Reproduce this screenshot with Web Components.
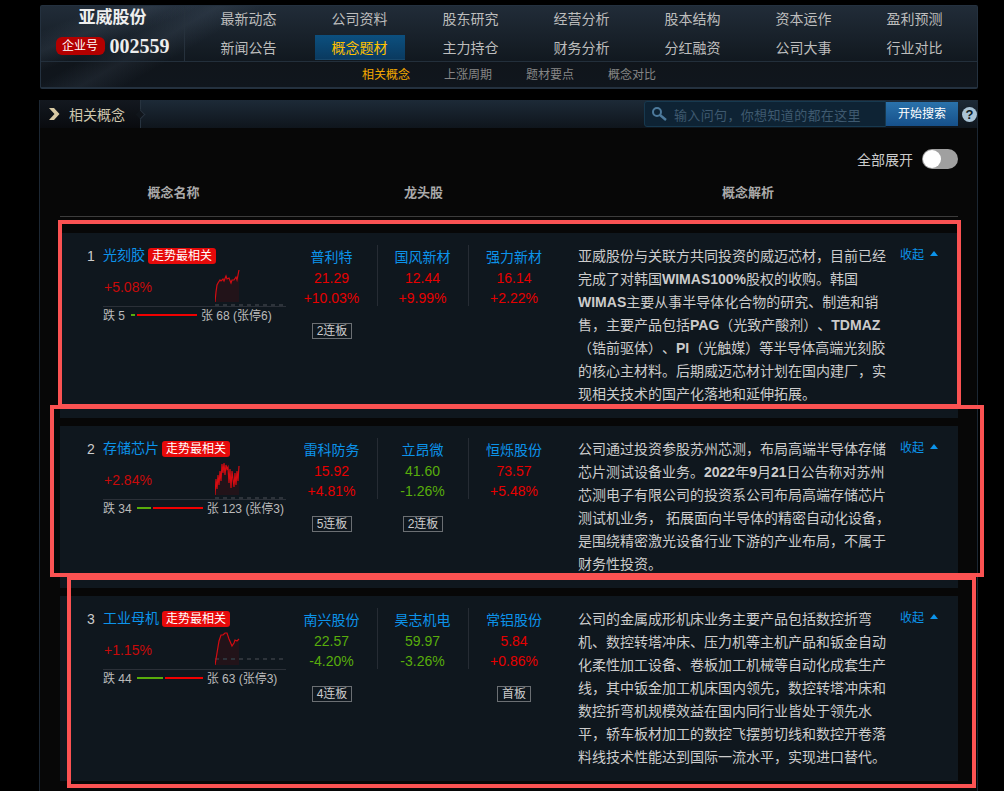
<!DOCTYPE html>
<html lang="zh">
<head>
<meta charset="utf-8">
<title>相关概念</title>
<style>
html,body{margin:0;padding:0;background:#000;height:791px;overflow:hidden}
body{font-family:"Liberation Sans","Noto Sans CJK SC",sans-serif;font-size:14px;color:#ccc}
b{font-weight:700}
</style>
</head>
<body>
<top-panel></top-panel>
<concept-panel>
  <concept-card num="1" name="光刻胶" pct="+5.08%" down="5" up="68" limit="6" green="4" red="60" gap="6" spark="1">
    <stock-col slot="stocks" name="普利特" price="21.29" pct="+10.03%" dir="up" tag="2连板" tagw="40"></stock-col>
    <stock-col slot="stocks" name="国风新材" price="12.44" pct="+9.99%" dir="up"></stock-col>
    <stock-col slot="stocks" name="强力新材" price="16.14" pct="+2.22%" dir="up" last></stock-col>
    亚威股份与关联方共同投资的威迈芯材，目前已经<br>
    完成了对韩国<b>WIMAS100%</b>股权的收购。韩国<br>
    <b>WIMAS</b>主要从事半导体化合物的研究、制造和销<br>
    售，主要产品包括<b>PAG</b>（光致产酸剂）、<b>TDMAZ</b><br>
    （锆前驱体）、<b>PI</b>（光触媒）等半导体高端光刻胶<br>
    的核心主材料。后期威迈芯材计划在国内建厂，实<br>
    现相关技术的国产化落地和延伸拓展。
  </concept-card>
  <concept-card num="2" name="存储芯片" pct="+2.84%" down="34" up="123" limit="3" green="14" red="50" gap="5" spark="2">
    <stock-col slot="stocks" name="雷科防务" price="15.92" pct="+4.81%" dir="up" tag="5连板" tagw="40"></stock-col>
    <stock-col slot="stocks" name="立昂微" price="41.60" pct="-1.26%" dir="down" tag="2连板" tagw="40"></stock-col>
    <stock-col slot="stocks" name="恒烁股份" price="73.57" pct="+5.48%" dir="up" last></stock-col>
    公司通过投资参股苏州芯测，布局高端半导体存储<br>
    芯片测试设备业务。<b>2022</b>年<b>9</b>月<b>21</b>日公告称对苏州<br>
    芯测电子有限公司的投资系公司布局高端存储芯片<br>
    测试机业务， 拓展面向半导体的精密自动化设备，<br>
    是围绕精密激光设备行业下游的产业布局，不属于<br>
    财务性投资。
  </concept-card>
  <concept-card num="3" name="工业母机" pct="+1.15%" down="44" up="63" limit="3" green="26" red="38" gap="5" spark="3">
    <stock-col slot="stocks" name="南兴股份" price="22.57" pct="-4.20%" dir="down" tag="4连板" tagw="40"></stock-col>
    <stock-col slot="stocks" name="昊志机电" price="59.97" pct="-3.26%" dir="down"></stock-col>
    <stock-col slot="stocks" name="常铝股份" price="5.84" pct="+0.86%" dir="up" tag="首板" tagw="34" last></stock-col>
    公司的金属成形机床业务主要产品包括数控折弯<br>
    机、数控转塔冲床、压力机等主机产品和钣金自动<br>
    化柔性加工设备、卷板加工机械等自动化成套生产<br>
    线，其中钣金加工机床国内领先，数控转塔冲床和<br>
    数控折弯机规模效益在国内同行业皆处于领先水<br>
    平，轿车板材加工的数控飞摆剪切线和数控开卷落<br>
    料线技术性能达到国际一流水平，实现进口替代。
  </concept-card>
</concept-panel>
<mark-box x="58" y="220" w="903" h="188"></mark-box>
<mark-box x="50" y="405" w="934" h="172"></mark-box>
<mark-box x="67" y="576" w="909" h="212"></mark-box>

<script>
const NAV=[["最新动态","公司资料","股东研究","经营分析","股本结构","资本运作","盈利预测"],
           ["新闻公告","概念题材","主力持仓","财务分析","分红融资","公司大事","行业对比"]];
class TopPanel extends HTMLElement{
  connectedCallback(){
    const root=this.attachShadow({mode:"open"});
    const cell=(t)=>`<div class="cell"><span class="${t==="概念题材"?"on":""}">${t}</span></div>`;
    root.innerHTML=`<style>
      :host{display:block;box-sizing:border-box;width:938px;height:84px;margin:5px 0 0 40px;border:1px solid #24313f;border-bottom:2px solid #24313f;border-radius:2px;
        background:
          linear-gradient(158deg,transparent 12%,rgba(120,140,165,.13) 22%,transparent 32%) 0 0/300px 84px no-repeat,
          linear-gradient(150deg,transparent 30%,rgba(120,140,165,.11) 40%,transparent 50%) 0 0/300px 84px no-repeat,
          linear-gradient(#212c38 0,#11181f 55px,#10151b 56px,#10161d 100%);
        color:#bdbdbd}
      .main{display:flex;height:55px;border-bottom:1px solid #232f3b}
      .logo{box-sizing:border-box;width:144px;border-right:1px solid #26313c;display:flex;flex-direction:column;align-items:center}
      .name{font:700 17px/24px "Liberation Serif","Noto Sans CJK SC",serif;color:#eee;margin-top:0}
      .id{display:flex;align-items:center;gap:5px;margin-top:7px}
      .badge{box-sizing:border-box;width:49px;height:18px;background:#b30000;border-radius:6px;color:#fff;font-size:12px;line-height:18px;text-align:center}
      .code{font:700 20px/18px "Liberation Serif",serif;color:#eee}
      .nav{display:grid;grid-template-columns:repeat(7,111px);grid-template-rows:29px 25px;padding-left:8px}
      .cell{display:flex;justify-content:center;line-height:26px;font-size:14px}
      .cell span{width:90px;height:25px;text-align:center}
      .cell span.on{color:#ffc000;background:linear-gradient(#0c507f,#0a3a60);border-bottom:1px solid #17476b;box-sizing:border-box}
      .sub{display:flex;gap:34px;padding-left:321px;font-size:12px;line-height:26px;color:#868686}
      .sub .on{color:#f5a800}
    </style>
    <div class="main">
      <div class="logo"><div class="name">亚威股份</div>
        <div class="id"><span class="badge">企业号</span><span class="code">002559</span></div></div>
      <div class="nav">${NAV.flat().map(cell).join("")}</div>
    </div>
    <div class="sub"><span class="on">相关概念</span><span>上涨周期</span><span>题材要点</span><span>概念对比</span></div>`;
  }
}
class SearchBox extends HTMLElement{
  connectedCallback(){
    this.attachShadow({mode:"open"}).innerHTML=`<style>
      :host{display:flex;align-items:center;height:26px}
      .box{box-sizing:border-box;width:242px;height:26px;display:flex;align-items:center;gap:7px;padding-left:6px;background:#0e2334;border:1px solid #17394f;border-radius:3px 0 0 3px;color:#3f5a70;font-size:13px;letter-spacing:.35px;white-space:nowrap}
      button{all:unset;box-sizing:border-box;width:72px;height:24px;text-align:center;font:12px/25px "Liberation Sans","Noto Sans CJK SC",sans-serif;color:#fff;background:linear-gradient(#2a72ab,#16508a)}
      .help{width:15px;height:15px;border-radius:50%;background:#a9c3d6;color:#0d1a24;font:700 13px/15px "Liberation Sans",sans-serif;text-align:center;margin-left:4px}
    </style>
    <div class="box"><svg width="16" height="16" viewBox="0 0 16 16"><circle cx="6" cy="6" r="4" fill="none" stroke="#4d7a9c" stroke-width="2"/><path d="M9 9l6 5" stroke="#4d7a9c" stroke-width="2.4"/></svg><span>输入问句，你想知道的都在这里</span></div>
    <button type="button">开始搜索</button><span class="help">?</span>`;
  }
}
class ConceptPanel extends HTMLElement{
  connectedCallback(){
    this.attachShadow({mode:"open"}).innerHTML=`<style>
      :host{display:block;box-sizing:border-box;width:939px;height:700px;margin:11px 0 0 39px;border-left:1px solid #1c2733;border-right:1px solid #1c2733;background:#070707}
      .head{display:flex;justify-content:space-between;height:28px;background:linear-gradient(#1d2a37,#0f151c)}
      .tab{position:relative;box-sizing:border-box;width:101px;display:flex;align-items:center;gap:9px;padding-left:9px;color:#cfc7ae;font-size:14px;background:linear-gradient(#13181f,#090b0f);border-right:1px solid #27333f}
      .tab::after{content:"";position:absolute;right:-4px;top:11px;width:6px;height:6px;background:#10151b;border-top:1px solid #27333f;border-right:1px solid #27333f;transform:rotate(45deg)}
      .right{margin-top:1px}
      .body{padding:0 19px 0 20px}
      .switch{display:flex;justify-content:flex-end;align-items:center;gap:9px;margin-top:21px;height:20px;font-size:14px;color:#ccc}
      .track{width:36px;height:20px;border-radius:10px;background:#a0a0a0;position:relative}
      .knob{position:absolute;left:1px;top:1px;width:18px;height:18px;border-radius:50%;background:#fff}
      .cols{display:grid;grid-template-columns:227px 273px 376px 1fr;margin-top:14px;height:20px;line-height:20px;padding-bottom:13px;border-bottom:1px solid #3c3c3c;font-size:13px;font-weight:700;color:#aaa;text-align:center}
      .cards{display:flex;flex-direction:column;gap:8px;margin-top:16px}
    </style>
    <div class="head">
      <div class="tab"><svg width="11" height="12" viewBox="0 0 11 12"><path d="M0 0h5l5.5 6L5 12H0l5.5-6z" fill="#d8c9a3"/></svg><span>相关概念</span></div>
      <search-box class="right"></search-box>
    </div>
    <div class="body">
      <div class="switch"><span>全部展开</span><span class="track"><span class="knob"></span></span></div>
      <div class="cols"><span>概念名称</span><span>龙头股</span><span>概念解析</span></div>
      <div class="cards"><slot></slot></div>
    </div>`;
  }
}
const SPARKS={
 1:{line:"M0 34L1 24L2 17L3 15L5 12L6 13L8 11L9 13L11 8L12 11L14 10L16 15L17 12L19 12L21 9L22 12L24 2",base:37},
 2:{line:"M0 34L1 18L2 28L3 14L4 24L5 10L6 20L7 3L8 12L9 2L10 14L11 4L12 8L13 6L14 22L15 8L16 27L17 10L18 18L19 26L20 12L21 24L22 10L23 20L24 5",base:37},
 3:{line:"M0 34L1 28L2 22L4 10L6 4L8 4L10 2L12 2L14 8L17 15L19 12L20 9L22 10L24 8",base:28}
};
class ConceptCard extends HTMLElement{
  connectedCallback(){
    const a=n=>this.getAttribute(n);
    const s=SPARKS[a("spark")];
    this.attachShadow({mode:"open"}).innerHTML=`<style>
      :host{display:grid;grid-template-columns:227px 273px 340px 58px;padding:12px 0;background:#0f171e}
      .left{padding-left:27px}
      .title{display:flex;align-items:flex-start;height:23px}
      .num{width:16px;color:#ccc;font-size:14px;line-height:23px}
      .name{color:#0c93ea;font-size:14px;line-height:21px}
      .hot{margin:3px 0 0 3px;width:68px;height:16px;background:#e60a0a;border-radius:3px;color:#fff;font-size:12px;line-height:16px;text-align:center}
      .chart{display:flex;align-items:center;width:183px;height:38px;margin-left:16px;border-bottom:1px solid #2b3038}
      .pct{width:112px;box-sizing:border-box;padding-left:1px;color:#c80a0a;font-size:14px}
      svg{flex:none;display:block}
      .sum{display:flex;margin-left:16px;height:18px;line-height:18px;font-size:12px;color:#bbb;white-space:nowrap}
      .g,.r{height:2px;margin-top:7px}
      .g{background:#58ad0c}
      .r{background:#f00000;margin:7px 4px 0 2px}
      .stocks{display:flex}
      .desc{margin-left:18px;font-size:14px;line-height:23px;color:#ccc;white-space:nowrap;text-spacing-trim:space-all}
      .fold{display:flex;align-items:center;gap:6px;height:20px;margin-top:-2px;font-size:12px;color:#0c93ea}
      .tri{width:0;height:0;border:4px solid transparent;border-top:0;border-bottom:5px solid #0c93ea}
    </style>
    <div class="left">
      <div class="title"><span class="num">${a("num")}</span><span class="name">${a("name")}</span><span class="hot">走势最相关</span></div>
      <div class="chart"><span class="pct">${a("pct")}</span>
        <svg width="71" height="38" viewBox="0 0 71 38">
          <path d="${s.line}V34H0Z" fill="#3a1015" opacity=".45"/>
          <path d="M0 ${s.base}H68" stroke="#2d333a" stroke-width="2" stroke-dasharray="4 4"/>
          <path d="${s.line}" fill="none" stroke="#d40c12" stroke-width="1.2"/>
        </svg></div>
      <div class="sum"><span>跌 ${a("down")}</span><span class="g" style="width:${a("green")}px;margin-left:${a("gap")}px"></span><span class="r" style="width:${a("red")}px"></span><span>张 ${a("up")} (张停${a("limit")})</span></div>
    </div>
    <div class="stocks"><slot name="stocks"></slot></div>
    <div class="desc"><slot></slot></div>
    <div class="fold"><span>收起</span><span class="tri"></span></div>`;
  }
}
class StockCol extends HTMLElement{
  connectedCallback(){
    const a=n=>this.getAttribute(n);
    const c=a("dir")==="up"?"#e60000":"#58ad0c";
    const tag=a("tag")?`<span class="tag" style="width:${a("tagw")}px">${a("tag")}</span>`:"";
    this.attachShadow({mode:"open"}).innerHTML=`<style>
      :host{display:flex;flex-direction:column;align-items:center;width:91px;box-sizing:border-box}
      .top{box-sizing:border-box;width:100%;height:61px;padding-right:1px;text-align:center;${this.hasAttribute("last")?"":"border-right:1px solid #262c34;"}}
      .n{color:#0c93ea;font-size:14px;line-height:23px;padding-top:1px;margin-bottom:-1px}
      .v{font-size:14px;line-height:20px;color:${c}}
      .tag{box-sizing:border-box;height:16px;margin:17px 1px 0 0;border:1px solid #6b6f73;color:#ccc;font-size:12px;line-height:14px;text-align:center;white-space:nowrap}
    </style>
    <div class="top"><div class="n">${a("name")}</div><div class="v">${a("price")}</div><div class="v">${a("pct")}</div></div>${tag}`;
  }
}
class MarkBox extends HTMLElement{
  connectedCallback(){
    const a=n=>this.getAttribute(n);
    const r=this.attachShadow({mode:"open"});
    r.innerHTML=`<style>:host{position:absolute;box-sizing:border-box;border:4px solid #fb5252;pointer-events:none}</style>`;
    Object.assign(this.style,{left:a("x")+"px",top:a("y")+"px",width:a("w")+"px",height:a("h")+"px"});
  }
}
customElements.define("top-panel",TopPanel);
customElements.define("search-box",SearchBox);
customElements.define("stock-col",StockCol);
customElements.define("concept-card",ConceptCard);
customElements.define("concept-panel",ConceptPanel);
customElements.define("mark-box",MarkBox);
</script>
</body>
</html>
